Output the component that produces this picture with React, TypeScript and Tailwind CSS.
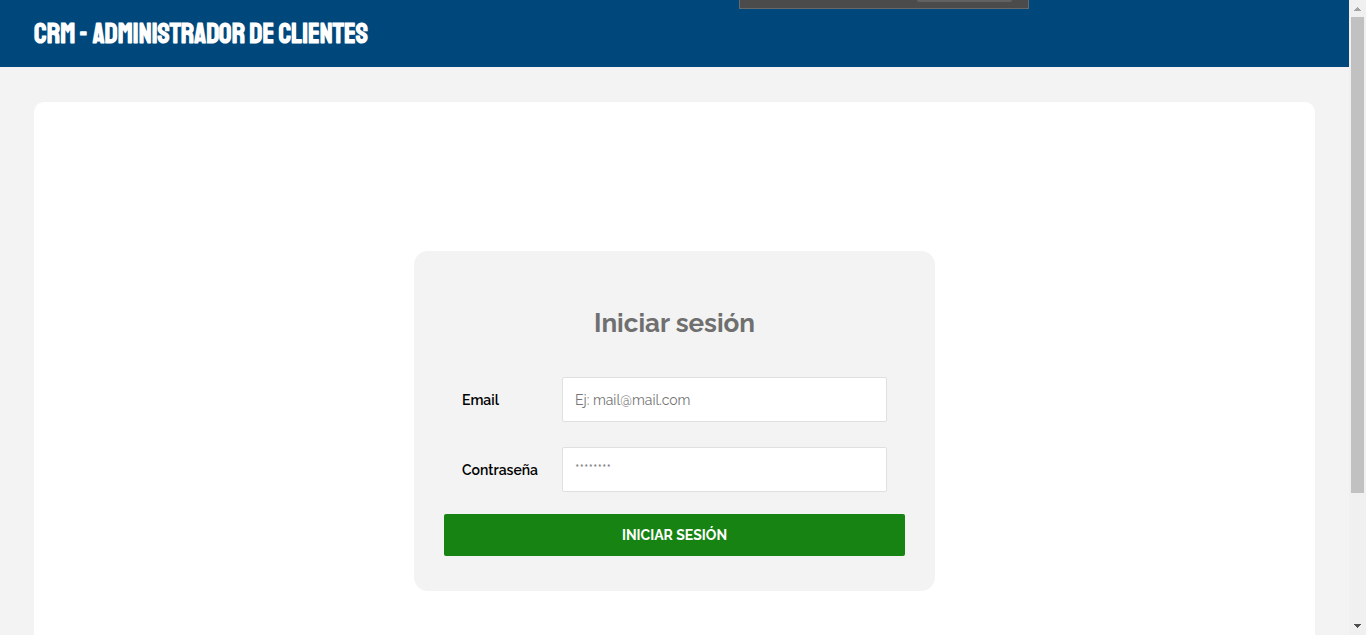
import type { InputHTMLAttributes } from 'react';

type FieldProps = InputHTMLAttributes<HTMLInputElement> & { id: string; label: string };

function Field({ id, label, ...input }: FieldProps) {
  return (
    <div className="flex items-center px-[18px]">
      <label htmlFor={id} className="w-[100px] shrink-0 text-sm font-semibold text-black">
        {label}
      </label>
      <input
        id={id}
        className="h-[45px] min-w-0 flex-1 rounded-xs border border-[#e0e0e0] bg-white px-3 text-sm text-[#444] placeholder:text-[#757575] focus:outline-[#00487c]"
        {...input}
      />
    </div>
  );
}

function LoginForm() {
  return (
    <form
      className="w-full max-w-[521px] rounded-[14px] bg-[#f3f3f3] px-[30px] pt-14 pb-[35px]"
      onSubmit={(event) => event.preventDefault()}
    >
      <h2 className="text-center text-[26px] leading-8 font-bold text-[#6f6f6f]">Iniciar sesión</h2>
      <div className="mt-[38px] flex flex-col gap-[25px]">
        <Field id="email" label="Email" type="email" placeholder="Ej: mail@mail.com" />
        <Field id="password" label="Contraseña" type="password" placeholder="********" />
      </div>
      <button
        type="submit"
        className="mt-[22px] h-[42px] w-full rounded-xs bg-[#168312] text-sm font-bold text-white uppercase"
      >
        Iniciar sesión
      </button>
    </form>
  );
}

function ScrollRail() {
  return (
    <div aria-hidden="true" className="flex w-[17px] shrink-0 flex-col items-center bg-[#f0f0f0]">
      <svg className="h-[17px] w-[17px] shrink-0" viewBox="0 0 17 17" shapeRendering="crispEdges">
        <path d="M8 7h1v1h1v1h1v1h1v1H5v-1h1V9h1V8h1z" fill="#a3a3a3" />
      </svg>
      <div className="min-h-0 w-full flex-1 px-0.5">
        <div className="h-[79.2%] bg-[#c1c1c1]" />
      </div>
      <svg className="h-[17px] w-[17px] shrink-0" viewBox="0 0 17 17" shapeRendering="crispEdges">
        <path d="M5 6h7v1h-1v1h-1v1H9v1H8V9H7V8H6V7H5z" fill="#505050" />
      </svg>
    </div>
  );
}

export default function App() {
  return (
    <div className="relative flex h-screen overflow-hidden bg-[#f3f3f3] font-['Raleway','Lato',sans-serif]">
      <div className="min-w-0 flex-1 overflow-hidden">
        <header className="flex h-[67px] items-center bg-[#00487c] px-[34px]">
          <h1 className="font-['Staatliches','Liberation_Sans_Narrow','Liberation_Sans',sans-serif] text-[28px] leading-9 font-bold whitespace-nowrap text-white uppercase">
            CRM - Administrador de clientes
          </h1>
        </header>
        <main className="px-[34px] py-[35px]">
          <section className="flex min-h-[638px] items-center justify-center rounded-[10px] bg-white">
            <LoginForm />
          </section>
        </main>
      </div>
      <ScrollRail />
      <div className="absolute top-0 left-[739px] flex h-[9px] w-[290px] justify-end border border-t-0 border-[#696969] bg-[#4b4b4b] pr-4">
        <div className="h-0.5 w-[95px] rounded-b-xs bg-[#626262]" />
      </div>
    </div>
  );
}
